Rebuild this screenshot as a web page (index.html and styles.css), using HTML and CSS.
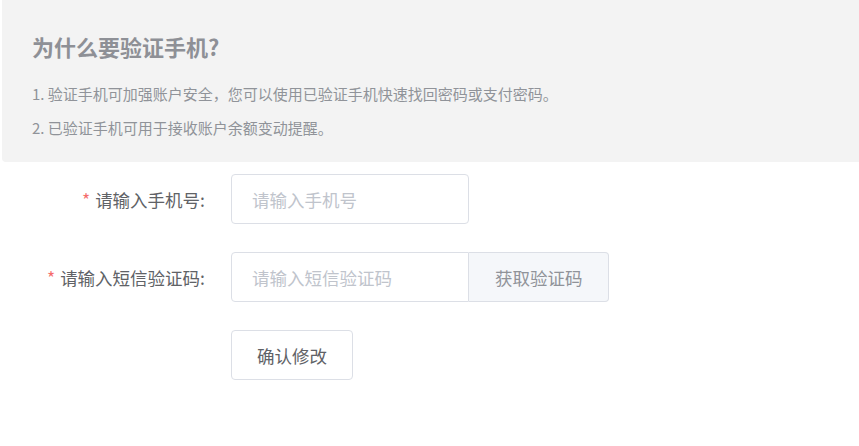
FILE: index.html
```html
<!DOCTYPE html>
<html lang="zh-CN">
<head>
    <meta charset="UTF-8">
    <meta name="viewport" content="width=device-width, initial-scale=1.0">
    <title>验证手机</title>
    <link rel="stylesheet" href="styles.css">
</head>
<body>
    <div class="tips">
        <h2>为什么要验证手机?</h2>
        <p>1. 验证手机可加强账户安全，您可以使用已验证手机快速找回密码或支付密码。</p>
        <p>2. 已验证手机可用于接收账户余额变动提醒。</p>
    </div>
    <form class="phone-form">
        <div class="form-item">
            <label class="form-label required" for="phone">请输入手机号:</label>
            <input type="text" id="phone" class="form-input" placeholder="请输入手机号">
        </div>
        <div class="form-item">
            <label class="form-label required" for="code">请输入短信验证码:</label>
            <div class="input-group">
                <input type="text" id="code" class="form-input" placeholder="请输入短信验证码">
                <button type="button" class="append">获取验证码</button>
            </div>
        </div>
        <div class="form-item">
            <div class="form-label"></div>
            <button type="submit" class="btn">确认修改</button>
        </div>
    </form>
</body>
</html>
```

FILE: styles.css
```css
body {
    margin: 0;
    font-family: "Noto Sans CJK SC", "Noto Sans", sans-serif;
    background-color: #fff;
}
.tips {
    margin-left: 2px;
    background-color: #f3f3f3;
    border-radius: 0 0 0 4px;
    padding: 31px 30px 17px;
    color: #909399;
}
.tips h2 {
    margin: 0 0 16px;
    font-size: 22px;
    line-height: 30px;
    font-weight: bold;
    color: #8e9096;
}
.tips p {
    margin: 0;
    font-size: 15px;
    line-height: 34px;
}
.phone-form {
    margin-top: 12px;
}
.form-item {
    display: flex;
    align-items: center;
    height: 50px;
    margin-bottom: 28px;
}
.form-label {
    flex: 0 0 231px;
    box-sizing: border-box;
    padding-right: 26px;
    text-align: right;
    font-size: 17.5px;
    color: #606266;
}
.form-label.required::before {
    content: "*";
    color: #f56c6c;
    margin-right: 5px;
}
.form-input {
    box-sizing: border-box;
    width: 238px;
    height: 50px;
    padding: 0 20px;
    border: 1px solid #dcdfe6;
    border-radius: 4px;
    font-family: inherit;
    font-size: 17.5px;
    color: #606266;
    outline: none;
}
.form-input::placeholder {
    color: #c0c4cc;
}
.input-group {
    display: flex;
}
.input-group .form-input {
    border-radius: 4px 0 0 4px;
}
.append {
    height: 50px;
    padding: 0 25px 0 26px;
    background-color: #f5f7fa;
    border: 1px solid #dcdfe6;
    border-left: none;
    border-radius: 0 4px 4px 0;
    font-family: inherit;
    font-size: 17.5px;
    color: #909399;
    cursor: pointer;
}
.btn {
    height: 50px;
    padding: 0 25px;
    background-color: #fff;
    border: 1px solid #dcdfe6;
    border-radius: 4px;
    font-family: inherit;
    font-size: 17.5px;
    color: #606266;
    cursor: pointer;
}
.btn:hover {
    color: #409eff;
    border-color: #c6e2ff;
}
```
